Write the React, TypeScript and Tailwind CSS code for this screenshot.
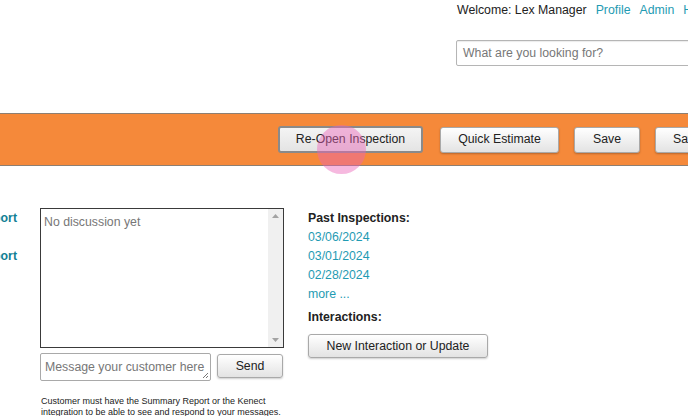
import React from "react";

const btn =
  "h-[26px] shrink-0 rounded-[3px] border border-[#a9a9a9] bg-gradient-to-b from-white to-[#e3e3e3] px-[17px] text-[12.3px] text-[#222] shadow-[0_1px_2px_rgba(0,0,0,0.25)] whitespace-nowrap";

export default function App() {
  return (
    <div className="relative h-[416px] w-[688px] overflow-hidden bg-white font-['Liberation_Sans',Arial,sans-serif] text-[12.3px] text-[#222]">
      {/* header */}
      <div className="flex h-[113px] flex-col items-start pl-[457px] pt-[2px]">
        <div className="flex gap-[9px] whitespace-nowrap leading-[16px]">
          <span>Welcome: Lex Manager</span>
          <span className="text-[#1f9bb3]">Profile</span>
          <span className="text-[#1f9bb3]">Admin</span>
          <span className="text-[#1f9bb3]">Help</span>
        </div>
        <div className="-ml-[1px] mt-[22px] flex h-[26px] w-[260px] shrink-0 items-center rounded-[2px] border border-[#b5b5b5] pl-[6px] text-[#777] shadow-[inset_0_1px_1px_rgba(0,0,0,0.08)] whitespace-nowrap">
          What are you looking for?
        </div>
      </div>

      {/* orange toolbar */}
      <div className="flex h-[53px] items-center gap-[17px] border-y border-[#8d7f72] bg-[#f5893a] pl-[278px]">
        <button className="h-[27px] w-[145px] shrink-0 rounded-[3px] border-2 border-[#8a8a8a] bg-gradient-to-b from-[#f4f4f4] to-[#e4e4e4] text-[12.3px] text-[#222] whitespace-nowrap">
          Re-Open Inspection
        </button>
        <div className="flex shrink-0 gap-[15px]">
          <button className={btn + " w-[119px]"}>Quick Estimate</button>
          <button className={btn + " w-[66px]"}>Save</button>
          <button className={btn}>Save &amp; Close</button>
        </div>
      </div>

      {/* click indicator */}
      <div className="absolute left-[317px] top-[125px] h-[49px] w-[49px] rounded-full bg-[rgba(236,100,185,0.45)]" />

      {/* body */}
      <div className="flex pt-[42px]">
        {/* cut-off links */}
        <div className="flex w-[40px] shrink-0 flex-col items-end gap-[21px] pr-[23px] pt-[2px] font-bold text-[#127f95]">
          <span className="whitespace-nowrap leading-[17px]">Report</span>
          <span className="whitespace-nowrap leading-[17px]">Report</span>
        </div>

        {/* discussion */}
        <div className="flex w-[244px] shrink-0 flex-col">
          <div className="flex h-[140px] border border-[#3a3a3a]">
            <div className="flex-1 pl-[3px] pt-[4px] text-[#777]">No discussion yet</div>
            <div className="flex w-[15px] flex-col items-center justify-between bg-[#f0f0f0] py-[5px]">
              <svg width="7" height="4" viewBox="0 0 7 4">
                <path d="M0 4 L3.5 0 L7 4 Z" fill="#a3a3a3" />
              </svg>
              <svg width="7" height="4" viewBox="0 0 7 4">
                <path d="M0 0 L3.5 4 L7 0 Z" fill="#a3a3a3" />
              </svg>
            </div>
          </div>
          <div className="mt-[5px] flex items-start gap-[6px]">
            <div className="relative flex h-[28px] w-[171px] shrink-0 items-center overflow-hidden rounded-[2px] border border-[#a9a9a9] pl-[4px] text-[#777] whitespace-nowrap">
              Message your customer here
              <svg className="absolute bottom-[1px] right-[1px]" width="8" height="8" viewBox="0 0 8 8">
                <path d="M7 2 L2 7 M7 5 L5 7" stroke="#777" strokeWidth="1" />
              </svg>
            </div>
            <button className="mt-[1px] h-[24px] w-[66px] shrink-0 rounded-[3px] border border-[#a9a9a9] bg-gradient-to-b from-white to-[#e3e3e3] text-[12.3px] text-[#222] shadow-[0_1px_2px_rgba(0,0,0,0.2)]">
              Send
            </button>
          </div>
          <p className="ml-[1px] mt-[15px] text-[9px] leading-[11px] text-[#222]">
            Customer must have the Summary Report or the Kenect
            <br />
            integration to be able to see and respond to your messages.
          </p>
        </div>

        {/* past inspections */}
        <div className="ml-[24px] flex flex-col pt-[1px] leading-[19px]">
          <span className="font-bold">Past Inspections:</span>
          <span className="text-[#1f9bb3]">03/06/2024</span>
          <span className="text-[#1f9bb3]">03/01/2024</span>
          <span className="text-[#1f9bb3]">02/28/2024</span>
          <span className="text-[#1f9bb3]">more ...</span>
          <span className="mt-[4px] font-bold">Interactions:</span>
          <button className="mt-[7px] h-[24px] w-[180px] rounded-[3px] border border-[#a9a9a9] bg-gradient-to-b from-white to-[#e3e3e3] text-[12.3px] text-[#222] shadow-[0_1px_2px_rgba(0,0,0,0.2)]">
            New Interaction or Update
          </button>
        </div>
      </div>
    </div>
  );
}
